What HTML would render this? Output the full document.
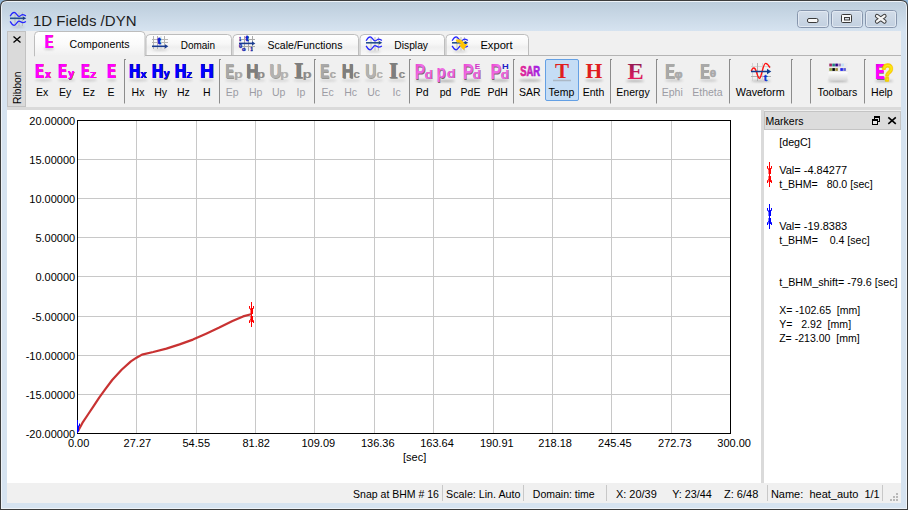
<!DOCTYPE html><html><head><meta charset="utf-8"><style>*{margin:0;padding:0}html,body{width:908px;height:510px;overflow:hidden;background:#8fb4d6}svg{display:block}</style></head><body>
<svg width="908" height="510" viewBox="0 0 908 510">
<defs>
<linearGradient id="gTitle" x1="0" y1="0" x2="0" y2="1"><stop offset="0" stop-color="#bccddc"/><stop offset="1" stop-color="#d6e3f0"/></linearGradient>
<linearGradient id="gTab" x1="0" y1="0" x2="0" y2="1"><stop offset="0" stop-color="#ffffff"/><stop offset="0.45" stop-color="#f7f7f7"/><stop offset="0.6" stop-color="#efefef"/><stop offset="1" stop-color="#fafafa"/></linearGradient>
<linearGradient id="gTabA" x1="0" y1="0" x2="0" y2="1"><stop offset="0" stop-color="#ffffff"/><stop offset="0.5" stop-color="#fbfbfb"/><stop offset="1" stop-color="#f0f0f0"/></linearGradient>
<linearGradient id="gBtn" x1="0" y1="0" x2="0" y2="1"><stop offset="0" stop-color="#d3dde9"/><stop offset="1" stop-color="#c2d0e0"/></linearGradient>
<linearGradient id="gSAR" x1="0" y1="0" x2="1" y2="0"><stop offset="0" stop-color="#e8208a"/><stop offset="1" stop-color="#9a20f0"/></linearGradient>
<linearGradient id="gEn" x1="0" y1="0" x2="0" y2="1"><stop offset="0" stop-color="#7a1a50"/><stop offset="1" stop-color="#ff1a60"/></linearGradient>
<linearGradient id="gTb" x1="0" y1="0" x2="0" y2="1"><stop offset="0" stop-color="#ffffff"/><stop offset="1" stop-color="#d8d8d8"/></linearGradient>
<linearGradient id="gPd" x1="0" y1="0" x2="1" y2="1"><stop offset="0" stop-color="#e830c8"/><stop offset="0.5" stop-color="#f070e8"/><stop offset="1" stop-color="#d040c8"/></linearGradient>
<linearGradient id="gE" x1="0" y1="0" x2="0.6" y2="1"><stop offset="0" stop-color="#b000b8"/><stop offset="0.35" stop-color="#ff00ff"/><stop offset="1" stop-color="#ff00ff"/></linearGradient>
<linearGradient id="gH" x1="0" y1="0" x2="0.6" y2="1"><stop offset="0" stop-color="#0000a0"/><stop offset="0.35" stop-color="#0000ff"/><stop offset="1" stop-color="#0000ff"/></linearGradient>
<filter id="blur1" x="-50%" y="-200%" width="200%" height="500%"><feGaussianBlur stdDeviation="1.1"/></filter>
</defs>
<path d="M0 7 Q0 0 7 0 H901 Q908 0 908 7 V510 H0 Z" fill="#3c3c3c"/>
<path d="M1 7 Q1 1 7 1 H901 Q907 1 907 7 V509 H1 Z" fill="#eef3f8"/>
<path d="M2 7 Q2 2 7 2 H901 Q906 2 906 7 V508 H2 Z" fill="#d6e3f0"/>
<path d="M2 7 Q2 2 7 2 H901 Q906 2 906 7 V31 H2 Z" fill="url(#gTitle)"/>
<rect x="7" y="31" width="894" height="472" fill="#f0f0f0" rx="0" />
<text x="33" y="26" font-family="'Liberation Sans', sans-serif" font-size="15.4" font-weight="normal" fill="#1e1e1e" text-anchor="start" textLength="103.5" lengthAdjust="spacingAndGlyphs"  xml:space="preserve">1D Fields /DYN</text>
<rect x="797.5" y="10.5" width="31" height="17" fill="url(#gBtn)" stroke="#8796ad" rx="3" />
<rect x="798.5" y="11.5" width="29" height="15" fill="none" stroke="#e2e9f2" rx="2" />
<rect x="831.5" y="10.5" width="31" height="17" fill="url(#gBtn)" stroke="#8796ad" rx="3" />
<rect x="832.5" y="11.5" width="29" height="15" fill="none" stroke="#e2e9f2" rx="2" />
<rect x="865.5" y="10.5" width="31" height="17" fill="url(#gBtn)" stroke="#8796ad" rx="3" />
<rect x="866.5" y="11.5" width="29" height="15" fill="none" stroke="#e2e9f2" rx="2" />
<rect x="807.5" y="18.5" width="10.5" height="4" fill="#f8f8f8" stroke="#3a3a3a" rx="1.5" />
<rect x="841.5" y="14.5" width="10" height="8" fill="#f8f8f8" stroke="#3a3a3a" rx="1" />
<rect x="844.5" y="17.5" width="5" height="2.5" fill="#d8dce4" stroke="#3a3a3a" rx="0" />
<path d="M877 16 L884.5 21.5 M884.5 16 L877 21.5" stroke="#3a3a3a" stroke-width="4.2" stroke-linecap="round"/>
<path d="M877 16 L884.5 21.5 M884.5 16 L877 21.5" stroke="#f4f4f4" stroke-width="2.2" stroke-linecap="round"/>
<path d="M146.0 55.5 V38.5 Q146.0 34.5 150.0 34.5 H227.5 Q231.5 34.5 231.5 38.5 V55.5" fill="url(#gTab)" stroke="#bdbdbd"/>
<path d="M233.0 55.5 V38.5 Q233.0 34.5 237.0 34.5 H354.5 Q358.5 34.5 358.5 38.5 V55.5" fill="url(#gTab)" stroke="#bdbdbd"/>
<path d="M360.0 55.5 V38.5 Q360.0 34.5 364.0 34.5 H440.5 Q444.5 34.5 444.5 38.5 V55.5" fill="url(#gTab)" stroke="#bdbdbd"/>
<path d="M446.0 55.5 V38.5 Q446.0 34.5 450.0 34.5 H524.5 Q528.5 34.5 528.5 38.5 V55.5" fill="url(#gTab)" stroke="#bdbdbd"/>
<path d="M145 55.5 H901" stroke="#b4b4b4"/>
<path d="M34.5 56 V35.5 Q34.5 31.5 38.5 31.5 H141 Q145 31.5 145 35.5 V56 Z" fill="url(#gTabA)" stroke="#bdbdbd"/>
<rect x="35" y="55" width="109.5" height="2" fill="#f0f0f0" rx="0" />
<rect x="7.5" y="31.5" width="18" height="75" fill="#dadada" stroke="#c2c2c2" rx="0" />
<path d="M13.5 36.5 L20.5 42.5 M20.5 36.5 L13.5 42.5" stroke="#000" stroke-width="1.3"/>
<text transform="translate(21,104) rotate(-90)" font-family="'Liberation Sans', sans-serif" font-size="11" fill="#000" textLength="32.5" lengthAdjust="spacingAndGlyphs">Ribbon</text>
<text x="69.5" y="48" font-family="'Liberation Sans', sans-serif" font-size="11" font-weight="normal" fill="#000" text-anchor="start" textLength="60" lengthAdjust="spacingAndGlyphs"  xml:space="preserve">Components</text>
<text x="180.7" y="49" font-family="'Liberation Sans', sans-serif" font-size="11" font-weight="normal" fill="#000" text-anchor="start" textLength="34.4" lengthAdjust="spacingAndGlyphs"  xml:space="preserve">Domain</text>
<text x="267.6" y="49" font-family="'Liberation Sans', sans-serif" font-size="11" font-weight="normal" fill="#000" text-anchor="start" textLength="74.8" lengthAdjust="spacingAndGlyphs"  xml:space="preserve">Scale/Functions</text>
<text x="394.3" y="49" font-family="'Liberation Sans', sans-serif" font-size="11" font-weight="normal" fill="#000" text-anchor="start" textLength="33.7" lengthAdjust="spacingAndGlyphs"  xml:space="preserve">Display</text>
<text x="480.4" y="49" font-family="'Liberation Sans', sans-serif" font-size="11" font-weight="normal" fill="#000" text-anchor="start" textLength="32.3" lengthAdjust="spacingAndGlyphs"  xml:space="preserve">Export</text>
<g transform="translate(10,12)" fill="none">
<path d="M5 0.5 V14 M9 0.5 V14 M12.4 0.5 V14" stroke="#b4b4ac" stroke-width="0.8"/>
<path d="M0.1 4.2 C1.5 1.5 3 0.3 4.2 0.3 C6 0.3 7.3 4.4 8.9 4.4 C10.5 4.4 11.3 2.5 12.6 2.5 C14 2.5 15 3.5 15.9 4" stroke="#2424ff" stroke-width="1.25"/>
<path d="M0.1 9.4 C1.5 12 3 13.3 4.2 13.3 C6 13.3 7.3 9.2 8.9 9.2 C10.5 9.2 11.3 10.5 12.6 10.5 C14 10.5 15 10 15.9 9.4" stroke="#2424ff" stroke-width="1.25"/>
<path d="M0 6.3 H14" stroke="#24508c" stroke-width="1.6"/>
<path d="M13 4.5 L16.3 6.3 L13 8.1 Z" fill="#1a3c8a"/>
</g>
<ellipse cx="18.00" cy="27" rx="7.00" ry="0.8" fill="#707070" opacity="0.35" filter="url(#blur1)"/>
<g transform="translate(366,36.5)" fill="none">
<path d="M5 0.5 V14 M9 0.5 V14 M12.4 0.5 V14" stroke="#b4b4ac" stroke-width="0.8"/>
<path d="M0.1 4.2 C1.5 1.5 3 0.3 4.2 0.3 C6 0.3 7.3 4.4 8.9 4.4 C10.5 4.4 11.3 2.5 12.6 2.5 C14 2.5 15 3.5 15.9 4" stroke="#2424ff" stroke-width="1.25"/>
<path d="M0.1 9.4 C1.5 12 3 13.3 4.2 13.3 C6 13.3 7.3 9.2 8.9 9.2 C10.5 9.2 11.3 10.5 12.6 10.5 C14 10.5 15 10 15.9 9.4" stroke="#2424ff" stroke-width="1.25"/>
<path d="M0 6.3 H14" stroke="#24508c" stroke-width="1.6"/>
<path d="M13 4.5 L16.3 6.3 L13 8.1 Z" fill="#1a3c8a"/>
</g>
<ellipse cx="374.00" cy="51.5" rx="7.00" ry="0.8" fill="#707070" opacity="0.35" filter="url(#blur1)"/>
<g transform="translate(452,36.5)" fill="none">
<path d="M5 0.5 V14 M9 0.5 V14 M12.4 0.5 V14" stroke="#b4b4ac" stroke-width="0.8"/>
<path d="M0.1 4.2 C1.5 1.5 3 0.3 4.2 0.3 C6 0.3 7.3 4.4 8.9 4.4 C10.5 4.4 11.3 2.5 12.6 2.5 C14 2.5 15 3.5 15.9 4" stroke="#2424ff" stroke-width="1.25"/>
<path d="M0.1 9.4 C1.5 12 3 13.3 4.2 13.3 C6 13.3 7.3 9.2 8.9 9.2 C10.5 9.2 11.3 10.5 12.6 10.5 C14 10.5 15 10 15.9 9.4" stroke="#2424ff" stroke-width="1.25"/>
<path d="M0 6.3 H14" stroke="#24508c" stroke-width="1.6"/>
<path d="M13 4.5 L16.3 6.3 L13 8.1 Z" fill="#1a3c8a"/>
</g>
<ellipse cx="460.00" cy="51.5" rx="7.00" ry="0.8" fill="#707070" opacity="0.35" filter="url(#blur1)"/>
<path d="M456.5 41.5 C459 40 462 41 463 45" stroke="#ffc400" stroke-width="3.2" fill="none"/>
<path d="M458.5 44.5 L467.5 44 L463.5 50 Z" fill="#ffc400"/>
<ellipse cx="49.00" cy="48.8" rx="5.00" ry="0.9" fill="#707070" opacity="0.45" filter="url(#blur1)"/>
<text transform="matrix(0.11964 0 0 0.17536 45.312 48.450)" font-family="'Liberation Sans'" font-weight="bold" font-size="100" fill="#5a5a50" opacity="0.55" stroke="#5a5a50" stroke-width="0.1" vector-effect="non-scaling-stroke" stroke-linejoin="round">E</text>
<text transform="matrix(0.11964 0 0 0.17536 45.612 48.450)" font-family="'Liberation Sans'" font-weight="bold" font-size="100" fill="#5a5a50" opacity="0.55" stroke="#5a5a50" stroke-width="0.1" vector-effect="non-scaling-stroke" stroke-linejoin="round">E</text>
<text transform="matrix(0.11964 0 0 0.17536 45.913 48.450)" font-family="'Liberation Sans'" font-weight="bold" font-size="100" fill="#5a5a50" opacity="0.55" stroke="#5a5a50" stroke-width="0.1" vector-effect="non-scaling-stroke" stroke-linejoin="round">E</text>
<text transform="matrix(0.11964 0 0 0.17536 44.712 47.850)" font-family="'Liberation Sans'" font-weight="bold" font-size="100" fill="url(#gE)"  stroke="url(#gE)" stroke-width="0.1" vector-effect="non-scaling-stroke" stroke-linejoin="round">E</text>
<text transform="matrix(0.11964 0 0 0.17536 45.012 47.850)" font-family="'Liberation Sans'" font-weight="bold" font-size="100" fill="url(#gE)"  stroke="url(#gE)" stroke-width="0.1" vector-effect="non-scaling-stroke" stroke-linejoin="round">E</text>
<text transform="matrix(0.11964 0 0 0.17536 45.312 47.850)" font-family="'Liberation Sans'" font-weight="bold" font-size="100" fill="url(#gE)"  stroke="url(#gE)" stroke-width="0.1" vector-effect="non-scaling-stroke" stroke-linejoin="round">E</text>
<path d="M153.5 36 V49 M157.5 36 V49 M164.5 36 V49 M152 39.5 H168 M152 42.5 H168" stroke="#b4b4b4" stroke-width="1"/>
<path d="M161 36 V49" stroke="#d8d8d8" stroke-width="1"/>
<text transform="matrix(0.08387 0 0 0.08485 157.666 44.165)" font-family="'Liberation Sans'" font-weight="bold" font-size="100" fill="#0a28d0"  stroke="#0a28d0" stroke-width="1.1" vector-effect="non-scaling-stroke" stroke-linejoin="round">t</text>
<path d="M152 46.3 H166" stroke="#1a3c90" stroke-width="1.6"/><path d="M165 44.2 L168.3 46.3 L165 48.4 Z" fill="#1a3c90"/>
<ellipse cx="160.00" cy="50" rx="8.00" ry="0.8" fill="#707070" opacity="0.35" filter="url(#blur1)"/>
<path d="M244.5 36 V51 M248.5 36 V51 M252.5 36 V51 M239 39.5 H255 M239 46.5 H255" stroke="#a8a8a8" stroke-width="1"/>
<text transform="matrix(0.03085 0 0 0.04565 239.290 40.625)" font-family="'Liberation Sans'" font-weight="bold" font-size="100" fill="#1a28b0"  stroke="#1a28b0" stroke-width="0.35" vector-effect="non-scaling-stroke" stroke-linejoin="round">1</text>
<text transform="matrix(0.07419 0 0 0.06818 245.826 41.232)" font-family="'Liberation Sans'" font-weight="bold" font-size="100" fill="#0a28d0"  stroke="#0a28d0" stroke-width="1.0" vector-effect="non-scaling-stroke" stroke-linejoin="round">t</text>
<path d="M239 43.4 H253" stroke="#1a3c90" stroke-width="1.6"/><path d="M252 41.3 L255.3 43.4 L252 45.5 Z" fill="#1a3c90"/>
<text transform="matrix(0.05521 0 0 0.04437 238.954 48.281)" font-family="'Liberation Sans'" font-weight="bold" font-size="100" fill="#1a28b0"  stroke="#1a28b0" stroke-width="0.35" vector-effect="non-scaling-stroke" stroke-linejoin="round">0</text>
<text transform="matrix(0.06562 0 0 0.04155 241.913 51.183)" font-family="'Liberation Sans'" font-weight="bold" font-size="100" fill="#1a28b0"  stroke="#1a28b0" stroke-width="0.35" vector-effect="non-scaling-stroke" stroke-linejoin="round">0</text>
<text transform="matrix(0.03511 0 0 0.04420 250.464 51.225)" font-family="'Liberation Sans'" font-weight="bold" font-size="100" fill="#1a28b0"  stroke="#1a28b0" stroke-width="0.35" vector-effect="non-scaling-stroke" stroke-linejoin="round">1</text>
<rect x="7" y="107" width="894" height="3" fill="#dadada" rx="0" />
<path d="M124.5 59 V103.5" stroke="#8c8c8c" stroke-width="1"/>
<path d="M124.5 59.5 H126" stroke="#8c8c8c" stroke-width="1"/>
<path d="M219.5 59 V103.5" stroke="#8c8c8c" stroke-width="1"/>
<path d="M219.5 59.5 H221" stroke="#8c8c8c" stroke-width="1"/>
<path d="M314.5 59 V103.5" stroke="#8c8c8c" stroke-width="1"/>
<path d="M314.5 59.5 H316" stroke="#8c8c8c" stroke-width="1"/>
<path d="M409.5 59 V103.5" stroke="#8c8c8c" stroke-width="1"/>
<path d="M409.5 59.5 H411" stroke="#8c8c8c" stroke-width="1"/>
<path d="M513.5 59 V103.5" stroke="#8c8c8c" stroke-width="1"/>
<path d="M513.5 59.5 H515" stroke="#8c8c8c" stroke-width="1"/>
<path d="M610.5 59 V103.5" stroke="#8c8c8c" stroke-width="1"/>
<path d="M610.5 59.5 H612" stroke="#8c8c8c" stroke-width="1"/>
<path d="M656.5 59 V103.5" stroke="#8c8c8c" stroke-width="1"/>
<path d="M656.5 59.5 H658" stroke="#8c8c8c" stroke-width="1"/>
<path d="M729.5 59 V103.5" stroke="#8c8c8c" stroke-width="1"/>
<path d="M729.5 59.5 H731" stroke="#8c8c8c" stroke-width="1"/>
<path d="M791.5 59 V103.5" stroke="#8c8c8c" stroke-width="1"/>
<path d="M791.5 59.5 H793" stroke="#8c8c8c" stroke-width="1"/>
<path d="M810.5 59 V103.5" stroke="#8c8c8c" stroke-width="1"/>
<path d="M810.5 59.5 H812" stroke="#8c8c8c" stroke-width="1"/>
<path d="M864.5 59 V103.5" stroke="#8c8c8c" stroke-width="1"/>
<path d="M864.5 59.5 H866" stroke="#8c8c8c" stroke-width="1"/>
<rect x="545.5" y="59.5" width="33" height="41" fill="#c5ddf5" stroke="#64a0e4" rx="1.5" />
<text x="36.07" y="96" font-family="'Liberation Sans', sans-serif" font-size="11" font-weight="normal" fill="#000" text-anchor="start" textLength="12.26" lengthAdjust="spacingAndGlyphs"  xml:space="preserve">Ex</text>
<text x="58.97" y="96" font-family="'Liberation Sans', sans-serif" font-size="11" font-weight="normal" fill="#000" text-anchor="start" textLength="12.26" lengthAdjust="spacingAndGlyphs"  xml:space="preserve">Ey</text>
<text x="82.87" y="96" font-family="'Liberation Sans', sans-serif" font-size="11" font-weight="normal" fill="#000" text-anchor="start" textLength="12.26" lengthAdjust="spacingAndGlyphs"  xml:space="preserve">Ez</text>
<text x="107.5" y="96" font-family="'Liberation Sans', sans-serif" font-size="11" font-weight="normal" fill="#000" text-anchor="start" textLength="7.01" lengthAdjust="spacingAndGlyphs"  xml:space="preserve">E</text>
<text x="131.58" y="96" font-family="'Liberation Sans', sans-serif" font-size="11" font-weight="normal" fill="#000" text-anchor="start" textLength="12.84" lengthAdjust="spacingAndGlyphs"  xml:space="preserve">Hx</text>
<text x="154.18" y="96" font-family="'Liberation Sans', sans-serif" font-size="11" font-weight="normal" fill="#000" text-anchor="start" textLength="12.84" lengthAdjust="spacingAndGlyphs"  xml:space="preserve">Hy</text>
<text x="176.88" y="96" font-family="'Liberation Sans', sans-serif" font-size="11" font-weight="normal" fill="#000" text-anchor="start" textLength="12.84" lengthAdjust="spacingAndGlyphs"  xml:space="preserve">Hz</text>
<text x="202.91" y="96" font-family="'Liberation Sans', sans-serif" font-size="11" font-weight="normal" fill="#000" text-anchor="start" textLength="7.59" lengthAdjust="spacingAndGlyphs"  xml:space="preserve">H</text>
<text x="225.77" y="96" font-family="'Liberation Sans', sans-serif" font-size="11" font-weight="normal" fill="#9c9ca4" text-anchor="start" textLength="12.85" lengthAdjust="spacingAndGlyphs"  xml:space="preserve">Ep</text>
<text x="248.88" y="96" font-family="'Liberation Sans', sans-serif" font-size="11" font-weight="normal" fill="#9c9ca4" text-anchor="start" textLength="13.43" lengthAdjust="spacingAndGlyphs"  xml:space="preserve">Hp</text>
<text x="271.89" y="96" font-family="'Liberation Sans', sans-serif" font-size="11" font-weight="normal" fill="#9c9ca4" text-anchor="start" textLength="13.43" lengthAdjust="spacingAndGlyphs"  xml:space="preserve">Up</text>
<text x="296.62" y="96" font-family="'Liberation Sans', sans-serif" font-size="11" font-weight="normal" fill="#9c9ca4" text-anchor="start" textLength="8.76" lengthAdjust="spacingAndGlyphs"  xml:space="preserve">Ip</text>
<text x="321.47" y="96" font-family="'Liberation Sans', sans-serif" font-size="11" font-weight="normal" fill="#9c9ca4" text-anchor="start" textLength="12.26" lengthAdjust="spacingAndGlyphs"  xml:space="preserve">Ec</text>
<text x="344.18" y="96" font-family="'Liberation Sans', sans-serif" font-size="11" font-weight="normal" fill="#9c9ca4" text-anchor="start" textLength="12.84" lengthAdjust="spacingAndGlyphs"  xml:space="preserve">Hc</text>
<text x="367.18" y="96" font-family="'Liberation Sans', sans-serif" font-size="11" font-weight="normal" fill="#9c9ca4" text-anchor="start" textLength="12.84" lengthAdjust="spacingAndGlyphs"  xml:space="preserve">Uc</text>
<text x="392.62" y="96" font-family="'Liberation Sans', sans-serif" font-size="11" font-weight="normal" fill="#9c9ca4" text-anchor="start" textLength="8.17" lengthAdjust="spacingAndGlyphs"  xml:space="preserve">Ic</text>
<text x="415.77" y="96" font-family="'Liberation Sans', sans-serif" font-size="11" font-weight="normal" fill="#000" text-anchor="start" textLength="12.85" lengthAdjust="spacingAndGlyphs"  xml:space="preserve">Pd</text>
<text x="439.75" y="96" font-family="'Liberation Sans', sans-serif" font-size="11" font-weight="normal" fill="#000" text-anchor="start" textLength="11.69" lengthAdjust="spacingAndGlyphs"  xml:space="preserve">pd</text>
<text x="460.57" y="96" font-family="'Liberation Sans', sans-serif" font-size="11" font-weight="normal" fill="#000" text-anchor="start" textLength="19.86" lengthAdjust="spacingAndGlyphs"  xml:space="preserve">PdE</text>
<text x="487.48" y="96" font-family="'Liberation Sans', sans-serif" font-size="11" font-weight="normal" fill="#000" text-anchor="start" textLength="20.44" lengthAdjust="spacingAndGlyphs"  xml:space="preserve">PdH</text>
<text x="519.0" y="96" font-family="'Liberation Sans', sans-serif" font-size="11" font-weight="normal" fill="#000" text-anchor="start" textLength="21.6" lengthAdjust="spacingAndGlyphs"  xml:space="preserve">SAR</text>
<text x="548.55" y="96" font-family="'Liberation Sans', sans-serif" font-size="11" font-weight="normal" fill="#000" text-anchor="start" textLength="25.69" lengthAdjust="spacingAndGlyphs"  xml:space="preserve">Temp</text>
<text x="582.7" y="96" font-family="'Liberation Sans', sans-serif" font-size="11" font-weight="normal" fill="#000" text-anchor="start" textLength="21.61" lengthAdjust="spacingAndGlyphs"  xml:space="preserve">Enth</text>
<text x="616.36" y="96" font-family="'Liberation Sans', sans-serif" font-size="11" font-weight="normal" fill="#000" text-anchor="start" textLength="33.29" lengthAdjust="spacingAndGlyphs"  xml:space="preserve">Energy</text>
<text x="661.78" y="96" font-family="'Liberation Sans', sans-serif" font-size="11" font-weight="normal" fill="#9c9ca4" text-anchor="start" textLength="21.03" lengthAdjust="spacingAndGlyphs"  xml:space="preserve">Ephi</text>
<text x="692.22" y="96" font-family="'Liberation Sans', sans-serif" font-size="11" font-weight="normal" fill="#9c9ca4" text-anchor="start" textLength="30.37" lengthAdjust="spacingAndGlyphs"  xml:space="preserve">Etheta</text>
<text x="735.85" y="96" font-family="'Liberation Sans', sans-serif" font-size="11" font-weight="normal" fill="#000" text-anchor="start" textLength="48.9" lengthAdjust="spacingAndGlyphs"  xml:space="preserve">Waveform</text>
<text x="817.44" y="96" font-family="'Liberation Sans', sans-serif" font-size="11" font-weight="normal" fill="#000" text-anchor="start" textLength="39.71" lengthAdjust="spacingAndGlyphs"  xml:space="preserve">Toolbars</text>
<text x="871.1" y="96" font-family="'Liberation Sans', sans-serif" font-size="11" font-weight="normal" fill="#000" text-anchor="start" textLength="21.61" lengthAdjust="spacingAndGlyphs"  xml:space="preserve">Help</text>
<ellipse cx="43.30" cy="80.3" rx="8.50" ry="1.1" fill="#707070" opacity="0.3" filter="url(#blur1)"/>
<text transform="matrix(0.12143 0 0 0.20290 35.650 78.200)" font-family="'Liberation Sans'" font-weight="bold" font-size="100" fill="#5a5a50" opacity="0.55" stroke="#5a5a50" stroke-width="0.2" vector-effect="non-scaling-stroke" stroke-linejoin="round">E</text>
<text transform="matrix(0.12143 0 0 0.20290 35.950 78.200)" font-family="'Liberation Sans'" font-weight="bold" font-size="100" fill="#5a5a50" opacity="0.55" stroke="#5a5a50" stroke-width="0.2" vector-effect="non-scaling-stroke" stroke-linejoin="round">E</text>
<text transform="matrix(0.12143 0 0 0.20290 36.250 78.200)" font-family="'Liberation Sans'" font-weight="bold" font-size="100" fill="#5a5a50" opacity="0.55" stroke="#5a5a50" stroke-width="0.2" vector-effect="non-scaling-stroke" stroke-linejoin="round">E</text>
<text transform="matrix(0.12143 0 0 0.20290 35.050 77.600)" font-family="'Liberation Sans'" font-weight="bold" font-size="100" fill="url(#gE)"  stroke="url(#gE)" stroke-width="0.2" vector-effect="non-scaling-stroke" stroke-linejoin="round">E</text>
<text transform="matrix(0.12143 0 0 0.20290 35.350 77.600)" font-family="'Liberation Sans'" font-weight="bold" font-size="100" fill="url(#gE)"  stroke="url(#gE)" stroke-width="0.2" vector-effect="non-scaling-stroke" stroke-linejoin="round">E</text>
<text transform="matrix(0.12143 0 0 0.20290 35.650 77.600)" font-family="'Liberation Sans'" font-weight="bold" font-size="100" fill="url(#gE)"  stroke="url(#gE)" stroke-width="0.2" vector-effect="non-scaling-stroke" stroke-linejoin="round">E</text>
<text transform="matrix(0.10370 0 0 0.11132 45.396 78.200)" font-family="'Liberation Sans'" font-weight="bold" font-size="100" fill="#5a5a50" opacity="0.55">x</text>
<text transform="matrix(0.10370 0 0 0.11132 45.546 78.200)" font-family="'Liberation Sans'" font-weight="bold" font-size="100" fill="#5a5a50" opacity="0.55">x</text>
<text transform="matrix(0.10370 0 0 0.11132 45.696 78.200)" font-family="'Liberation Sans'" font-weight="bold" font-size="100" fill="#5a5a50" opacity="0.55">x</text>
<text transform="matrix(0.10370 0 0 0.11132 44.796 77.600)" font-family="'Liberation Sans'" font-weight="bold" font-size="100" fill="url(#gE)" >x</text>
<text transform="matrix(0.10370 0 0 0.11132 44.946 77.600)" font-family="'Liberation Sans'" font-weight="bold" font-size="100" fill="url(#gE)" >x</text>
<text transform="matrix(0.10370 0 0 0.11132 45.096 77.600)" font-family="'Liberation Sans'" font-weight="bold" font-size="100" fill="url(#gE)" >x</text>
<ellipse cx="66.45" cy="80.3" rx="8.65" ry="1.1" fill="#707070" opacity="0.3" filter="url(#blur1)"/>
<text transform="matrix(0.12143 0 0 0.20290 58.650 78.200)" font-family="'Liberation Sans'" font-weight="bold" font-size="100" fill="#5a5a50" opacity="0.55" stroke="#5a5a50" stroke-width="0.2" vector-effect="non-scaling-stroke" stroke-linejoin="round">E</text>
<text transform="matrix(0.12143 0 0 0.20290 58.950 78.200)" font-family="'Liberation Sans'" font-weight="bold" font-size="100" fill="#5a5a50" opacity="0.55" stroke="#5a5a50" stroke-width="0.2" vector-effect="non-scaling-stroke" stroke-linejoin="round">E</text>
<text transform="matrix(0.12143 0 0 0.20290 59.250 78.200)" font-family="'Liberation Sans'" font-weight="bold" font-size="100" fill="#5a5a50" opacity="0.55" stroke="#5a5a50" stroke-width="0.2" vector-effect="non-scaling-stroke" stroke-linejoin="round">E</text>
<text transform="matrix(0.12143 0 0 0.20290 58.050 77.600)" font-family="'Liberation Sans'" font-weight="bold" font-size="100" fill="url(#gE)"  stroke="url(#gE)" stroke-width="0.2" vector-effect="non-scaling-stroke" stroke-linejoin="round">E</text>
<text transform="matrix(0.12143 0 0 0.20290 58.350 77.600)" font-family="'Liberation Sans'" font-weight="bold" font-size="100" fill="url(#gE)"  stroke="url(#gE)" stroke-width="0.2" vector-effect="non-scaling-stroke" stroke-linejoin="round">E</text>
<text transform="matrix(0.12143 0 0 0.20290 58.650 77.600)" font-family="'Liberation Sans'" font-weight="bold" font-size="100" fill="url(#gE)"  stroke="url(#gE)" stroke-width="0.2" vector-effect="non-scaling-stroke" stroke-linejoin="round">E</text>
<text transform="matrix(0.10741 0 0 0.10676 68.493 77.958)" font-family="'Liberation Sans'" font-weight="bold" font-size="100" fill="#5a5a50" opacity="0.55">y</text>
<text transform="matrix(0.10741 0 0 0.10676 68.643 77.958)" font-family="'Liberation Sans'" font-weight="bold" font-size="100" fill="#5a5a50" opacity="0.55">y</text>
<text transform="matrix(0.10741 0 0 0.10676 68.793 77.958)" font-family="'Liberation Sans'" font-weight="bold" font-size="100" fill="#5a5a50" opacity="0.55">y</text>
<text transform="matrix(0.10741 0 0 0.10676 67.893 77.358)" font-family="'Liberation Sans'" font-weight="bold" font-size="100" fill="url(#gE)" >y</text>
<text transform="matrix(0.10741 0 0 0.10676 68.043 77.358)" font-family="'Liberation Sans'" font-weight="bold" font-size="100" fill="url(#gE)" >y</text>
<text transform="matrix(0.10741 0 0 0.10676 68.193 77.358)" font-family="'Liberation Sans'" font-weight="bold" font-size="100" fill="url(#gE)" >y</text>
<ellipse cx="88.75" cy="80.3" rx="8.05" ry="1.1" fill="#707070" opacity="0.3" filter="url(#blur1)"/>
<text transform="matrix(0.11786 0 0 0.20290 81.575 78.200)" font-family="'Liberation Sans'" font-weight="bold" font-size="100" fill="#5a5a50" opacity="0.55" stroke="#5a5a50" stroke-width="0.2" vector-effect="non-scaling-stroke" stroke-linejoin="round">E</text>
<text transform="matrix(0.11786 0 0 0.20290 81.875 78.200)" font-family="'Liberation Sans'" font-weight="bold" font-size="100" fill="#5a5a50" opacity="0.55" stroke="#5a5a50" stroke-width="0.2" vector-effect="non-scaling-stroke" stroke-linejoin="round">E</text>
<text transform="matrix(0.11786 0 0 0.20290 82.175 78.200)" font-family="'Liberation Sans'" font-weight="bold" font-size="100" fill="#5a5a50" opacity="0.55" stroke="#5a5a50" stroke-width="0.2" vector-effect="non-scaling-stroke" stroke-linejoin="round">E</text>
<text transform="matrix(0.11786 0 0 0.20290 80.975 77.600)" font-family="'Liberation Sans'" font-weight="bold" font-size="100" fill="url(#gE)"  stroke="url(#gE)" stroke-width="0.2" vector-effect="non-scaling-stroke" stroke-linejoin="round">E</text>
<text transform="matrix(0.11786 0 0 0.20290 81.275 77.600)" font-family="'Liberation Sans'" font-weight="bold" font-size="100" fill="url(#gE)"  stroke="url(#gE)" stroke-width="0.2" vector-effect="non-scaling-stroke" stroke-linejoin="round">E</text>
<text transform="matrix(0.11786 0 0 0.20290 81.575 77.600)" font-family="'Liberation Sans'" font-weight="bold" font-size="100" fill="url(#gE)"  stroke="url(#gE)" stroke-width="0.2" vector-effect="non-scaling-stroke" stroke-linejoin="round">E</text>
<text transform="matrix(0.12381 0 0 0.11132 90.405 78.200)" font-family="'Liberation Sans'" font-weight="bold" font-size="100" fill="#5a5a50" opacity="0.55">z</text>
<text transform="matrix(0.12381 0 0 0.11132 90.555 78.200)" font-family="'Liberation Sans'" font-weight="bold" font-size="100" fill="#5a5a50" opacity="0.55">z</text>
<text transform="matrix(0.12381 0 0 0.11132 90.705 78.200)" font-family="'Liberation Sans'" font-weight="bold" font-size="100" fill="#5a5a50" opacity="0.55">z</text>
<text transform="matrix(0.12381 0 0 0.11132 89.805 77.600)" font-family="'Liberation Sans'" font-weight="bold" font-size="100" fill="url(#gE)" >z</text>
<text transform="matrix(0.12381 0 0 0.11132 89.955 77.600)" font-family="'Liberation Sans'" font-weight="bold" font-size="100" fill="url(#gE)" >z</text>
<text transform="matrix(0.12381 0 0 0.11132 90.105 77.600)" font-family="'Liberation Sans'" font-weight="bold" font-size="100" fill="url(#gE)" >z</text>
<ellipse cx="111.65" cy="80.3" rx="4.85" ry="1.1" fill="#707070" opacity="0.3" filter="url(#blur1)"/>
<text transform="matrix(0.12321 0 0 0.20290 107.637 78.200)" font-family="'Liberation Sans'" font-weight="bold" font-size="100" fill="#5a5a50" opacity="0.55" stroke="#5a5a50" stroke-width="0.2" vector-effect="non-scaling-stroke" stroke-linejoin="round">E</text>
<text transform="matrix(0.12321 0 0 0.20290 107.937 78.200)" font-family="'Liberation Sans'" font-weight="bold" font-size="100" fill="#5a5a50" opacity="0.55" stroke="#5a5a50" stroke-width="0.2" vector-effect="non-scaling-stroke" stroke-linejoin="round">E</text>
<text transform="matrix(0.12321 0 0 0.20290 108.237 78.200)" font-family="'Liberation Sans'" font-weight="bold" font-size="100" fill="#5a5a50" opacity="0.55" stroke="#5a5a50" stroke-width="0.2" vector-effect="non-scaling-stroke" stroke-linejoin="round">E</text>
<text transform="matrix(0.12321 0 0 0.20290 107.037 77.600)" font-family="'Liberation Sans'" font-weight="bold" font-size="100" fill="url(#gE)"  stroke="url(#gE)" stroke-width="0.2" vector-effect="non-scaling-stroke" stroke-linejoin="round">E</text>
<text transform="matrix(0.12321 0 0 0.20290 107.337 77.600)" font-family="'Liberation Sans'" font-weight="bold" font-size="100" fill="url(#gE)"  stroke="url(#gE)" stroke-width="0.2" vector-effect="non-scaling-stroke" stroke-linejoin="round">E</text>
<text transform="matrix(0.12321 0 0 0.20290 107.637 77.600)" font-family="'Liberation Sans'" font-weight="bold" font-size="100" fill="url(#gE)"  stroke="url(#gE)" stroke-width="0.2" vector-effect="non-scaling-stroke" stroke-linejoin="round">E</text>
<ellipse cx="138.20" cy="80.3" rx="9.40" ry="1.1" fill="#707070" opacity="0.3" filter="url(#blur1)"/>
<text transform="matrix(0.15000 0 0 0.20290 129.450 78.200)" font-family="'Liberation Sans'" font-weight="bold" font-size="100" fill="#5a5a50" opacity="0.55" stroke="#5a5a50" stroke-width="0.2" vector-effect="non-scaling-stroke" stroke-linejoin="round">H</text>
<text transform="matrix(0.15000 0 0 0.20290 129.800 78.200)" font-family="'Liberation Sans'" font-weight="bold" font-size="100" fill="#5a5a50" opacity="0.55" stroke="#5a5a50" stroke-width="0.2" vector-effect="non-scaling-stroke" stroke-linejoin="round">H</text>
<text transform="matrix(0.15000 0 0 0.20290 130.150 78.200)" font-family="'Liberation Sans'" font-weight="bold" font-size="100" fill="#5a5a50" opacity="0.55" stroke="#5a5a50" stroke-width="0.2" vector-effect="non-scaling-stroke" stroke-linejoin="round">H</text>
<text transform="matrix(0.15000 0 0 0.20290 128.850 77.600)" font-family="'Liberation Sans'" font-weight="bold" font-size="100" fill="url(#gH)"  stroke="url(#gH)" stroke-width="0.2" vector-effect="non-scaling-stroke" stroke-linejoin="round">H</text>
<text transform="matrix(0.15000 0 0 0.20290 129.200 77.600)" font-family="'Liberation Sans'" font-weight="bold" font-size="100" fill="url(#gH)"  stroke="url(#gH)" stroke-width="0.2" vector-effect="non-scaling-stroke" stroke-linejoin="round">H</text>
<text transform="matrix(0.15000 0 0 0.20290 129.550 77.600)" font-family="'Liberation Sans'" font-weight="bold" font-size="100" fill="url(#gH)"  stroke="url(#gH)" stroke-width="0.2" vector-effect="non-scaling-stroke" stroke-linejoin="round">H</text>
<text transform="matrix(0.10926 0 0 0.11132 140.891 78.200)" font-family="'Liberation Sans'" font-weight="bold" font-size="100" fill="#5a5a50" opacity="0.55">x</text>
<text transform="matrix(0.10926 0 0 0.11132 141.041 78.200)" font-family="'Liberation Sans'" font-weight="bold" font-size="100" fill="#5a5a50" opacity="0.55">x</text>
<text transform="matrix(0.10926 0 0 0.11132 141.191 78.200)" font-family="'Liberation Sans'" font-weight="bold" font-size="100" fill="#5a5a50" opacity="0.55">x</text>
<text transform="matrix(0.10926 0 0 0.11132 140.291 77.600)" font-family="'Liberation Sans'" font-weight="bold" font-size="100" fill="url(#gH)" >x</text>
<text transform="matrix(0.10926 0 0 0.11132 140.441 77.600)" font-family="'Liberation Sans'" font-weight="bold" font-size="100" fill="url(#gH)" >x</text>
<text transform="matrix(0.10926 0 0 0.11132 140.591 77.600)" font-family="'Liberation Sans'" font-weight="bold" font-size="100" fill="url(#gH)" >x</text>
<ellipse cx="161.10" cy="80.3" rx="9.50" ry="1.1" fill="#707070" opacity="0.3" filter="url(#blur1)"/>
<text transform="matrix(0.15517 0 0 0.20290 152.214 78.200)" font-family="'Liberation Sans'" font-weight="bold" font-size="100" fill="#5a5a50" opacity="0.55" stroke="#5a5a50" stroke-width="0.2" vector-effect="non-scaling-stroke" stroke-linejoin="round">H</text>
<text transform="matrix(0.15517 0 0 0.20290 152.564 78.200)" font-family="'Liberation Sans'" font-weight="bold" font-size="100" fill="#5a5a50" opacity="0.55" stroke="#5a5a50" stroke-width="0.2" vector-effect="non-scaling-stroke" stroke-linejoin="round">H</text>
<text transform="matrix(0.15517 0 0 0.20290 152.914 78.200)" font-family="'Liberation Sans'" font-weight="bold" font-size="100" fill="#5a5a50" opacity="0.55" stroke="#5a5a50" stroke-width="0.2" vector-effect="non-scaling-stroke" stroke-linejoin="round">H</text>
<text transform="matrix(0.15517 0 0 0.20290 151.614 77.600)" font-family="'Liberation Sans'" font-weight="bold" font-size="100" fill="url(#gH)"  stroke="url(#gH)" stroke-width="0.2" vector-effect="non-scaling-stroke" stroke-linejoin="round">H</text>
<text transform="matrix(0.15517 0 0 0.20290 151.964 77.600)" font-family="'Liberation Sans'" font-weight="bold" font-size="100" fill="url(#gH)"  stroke="url(#gH)" stroke-width="0.2" vector-effect="non-scaling-stroke" stroke-linejoin="round">H</text>
<text transform="matrix(0.15517 0 0 0.20290 152.314 77.600)" font-family="'Liberation Sans'" font-weight="bold" font-size="100" fill="url(#gH)"  stroke="url(#gH)" stroke-width="0.2" vector-effect="non-scaling-stroke" stroke-linejoin="round">H</text>
<text transform="matrix(0.10741 0 0 0.10676 163.993 77.958)" font-family="'Liberation Sans'" font-weight="bold" font-size="100" fill="#5a5a50" opacity="0.55">y</text>
<text transform="matrix(0.10741 0 0 0.10676 164.143 77.958)" font-family="'Liberation Sans'" font-weight="bold" font-size="100" fill="#5a5a50" opacity="0.55">y</text>
<text transform="matrix(0.10741 0 0 0.10676 164.293 77.958)" font-family="'Liberation Sans'" font-weight="bold" font-size="100" fill="#5a5a50" opacity="0.55">y</text>
<text transform="matrix(0.10741 0 0 0.10676 163.393 77.358)" font-family="'Liberation Sans'" font-weight="bold" font-size="100" fill="url(#gH)" >y</text>
<text transform="matrix(0.10741 0 0 0.10676 163.543 77.358)" font-family="'Liberation Sans'" font-weight="bold" font-size="100" fill="url(#gH)" >y</text>
<text transform="matrix(0.10741 0 0 0.10676 163.693 77.358)" font-family="'Liberation Sans'" font-weight="bold" font-size="100" fill="url(#gH)" >y</text>
<ellipse cx="183.60" cy="80.3" rx="9.10" ry="1.1" fill="#707070" opacity="0.3" filter="url(#blur1)"/>
<text transform="matrix(0.15690 0 0 0.20290 175.102 78.200)" font-family="'Liberation Sans'" font-weight="bold" font-size="100" fill="#5a5a50" opacity="0.55" stroke="#5a5a50" stroke-width="0.2" vector-effect="non-scaling-stroke" stroke-linejoin="round">H</text>
<text transform="matrix(0.15690 0 0 0.20290 175.452 78.200)" font-family="'Liberation Sans'" font-weight="bold" font-size="100" fill="#5a5a50" opacity="0.55" stroke="#5a5a50" stroke-width="0.2" vector-effect="non-scaling-stroke" stroke-linejoin="round">H</text>
<text transform="matrix(0.15690 0 0 0.20290 175.802 78.200)" font-family="'Liberation Sans'" font-weight="bold" font-size="100" fill="#5a5a50" opacity="0.55" stroke="#5a5a50" stroke-width="0.2" vector-effect="non-scaling-stroke" stroke-linejoin="round">H</text>
<text transform="matrix(0.15690 0 0 0.20290 174.502 77.600)" font-family="'Liberation Sans'" font-weight="bold" font-size="100" fill="url(#gH)"  stroke="url(#gH)" stroke-width="0.2" vector-effect="non-scaling-stroke" stroke-linejoin="round">H</text>
<text transform="matrix(0.15690 0 0 0.20290 174.852 77.600)" font-family="'Liberation Sans'" font-weight="bold" font-size="100" fill="url(#gH)"  stroke="url(#gH)" stroke-width="0.2" vector-effect="non-scaling-stroke" stroke-linejoin="round">H</text>
<text transform="matrix(0.15690 0 0 0.20290 175.202 77.600)" font-family="'Liberation Sans'" font-weight="bold" font-size="100" fill="url(#gH)"  stroke="url(#gH)" stroke-width="0.2" vector-effect="non-scaling-stroke" stroke-linejoin="round">H</text>
<text transform="matrix(0.11667 0 0 0.11132 186.633 78.200)" font-family="'Liberation Sans'" font-weight="bold" font-size="100" fill="#5a5a50" opacity="0.55">z</text>
<text transform="matrix(0.11667 0 0 0.11132 186.783 78.200)" font-family="'Liberation Sans'" font-weight="bold" font-size="100" fill="#5a5a50" opacity="0.55">z</text>
<text transform="matrix(0.11667 0 0 0.11132 186.933 78.200)" font-family="'Liberation Sans'" font-weight="bold" font-size="100" fill="#5a5a50" opacity="0.55">z</text>
<text transform="matrix(0.11667 0 0 0.11132 186.033 77.600)" font-family="'Liberation Sans'" font-weight="bold" font-size="100" fill="url(#gH)" >z</text>
<text transform="matrix(0.11667 0 0 0.11132 186.183 77.600)" font-family="'Liberation Sans'" font-weight="bold" font-size="100" fill="url(#gH)" >z</text>
<text transform="matrix(0.11667 0 0 0.11132 186.333 77.600)" font-family="'Liberation Sans'" font-weight="bold" font-size="100" fill="url(#gH)" >z</text>
<ellipse cx="206.90" cy="80.3" rx="6.90" ry="1.1" fill="#707070" opacity="0.3" filter="url(#blur1)"/>
<text transform="matrix(0.18793 0 0 0.20290 200.384 78.200)" font-family="'Liberation Sans'" font-weight="bold" font-size="100" fill="#5a5a50" opacity="0.55" stroke="#5a5a50" stroke-width="0.2" vector-effect="non-scaling-stroke" stroke-linejoin="round">H</text>
<text transform="matrix(0.18793 0 0 0.20290 200.734 78.200)" font-family="'Liberation Sans'" font-weight="bold" font-size="100" fill="#5a5a50" opacity="0.55" stroke="#5a5a50" stroke-width="0.2" vector-effect="non-scaling-stroke" stroke-linejoin="round">H</text>
<text transform="matrix(0.18793 0 0 0.20290 201.084 78.200)" font-family="'Liberation Sans'" font-weight="bold" font-size="100" fill="#5a5a50" opacity="0.55" stroke="#5a5a50" stroke-width="0.2" vector-effect="non-scaling-stroke" stroke-linejoin="round">H</text>
<text transform="matrix(0.18793 0 0 0.20290 199.784 77.600)" font-family="'Liberation Sans'" font-weight="bold" font-size="100" fill="url(#gH)"  stroke="url(#gH)" stroke-width="0.2" vector-effect="non-scaling-stroke" stroke-linejoin="round">H</text>
<text transform="matrix(0.18793 0 0 0.20290 200.134 77.600)" font-family="'Liberation Sans'" font-weight="bold" font-size="100" fill="url(#gH)"  stroke="url(#gH)" stroke-width="0.2" vector-effect="non-scaling-stroke" stroke-linejoin="round">H</text>
<text transform="matrix(0.18793 0 0 0.20290 200.484 77.600)" font-family="'Liberation Sans'" font-weight="bold" font-size="100" fill="url(#gH)"  stroke="url(#gH)" stroke-width="0.2" vector-effect="non-scaling-stroke" stroke-linejoin="round">H</text>
<ellipse cx="234.05" cy="80.5" rx="8.95" ry="1.1" fill="#707070" opacity="0.25" filter="url(#blur1)"/>
<text transform="matrix(0.12679 0 0 0.20870 225.812 78.800)" font-family="'Liberation Sans'" font-weight="bold" font-size="100" fill="#5a5a50" opacity="0.25">E</text>
<text transform="matrix(0.12679 0 0 0.20870 226.113 78.800)" font-family="'Liberation Sans'" font-weight="bold" font-size="100" fill="#5a5a50" opacity="0.25">E</text>
<text transform="matrix(0.12679 0 0 0.20870 226.412 78.800)" font-family="'Liberation Sans'" font-weight="bold" font-size="100" fill="#5a5a50" opacity="0.25">E</text>
<text transform="matrix(0.12679 0 0 0.20870 225.212 78.200)" font-family="'Liberation Sans'" font-weight="bold" font-size="100" fill="#a8a8a8" >E</text>
<text transform="matrix(0.12679 0 0 0.20870 225.512 78.200)" font-family="'Liberation Sans'" font-weight="bold" font-size="100" fill="#a8a8a8" >E</text>
<text transform="matrix(0.12679 0 0 0.20870 225.812 78.200)" font-family="'Liberation Sans'" font-weight="bold" font-size="100" fill="#a8a8a8" >E</text>
<text transform="matrix(0.14200 0 0 0.11333 234.506 78.120)" font-family="'Liberation Sans'" font-weight="bold" font-size="100" fill="#5a5a50" opacity="0.25">p</text>
<text transform="matrix(0.14200 0 0 0.11333 233.906 77.520)" font-family="'Liberation Sans'" font-weight="bold" font-size="100" fill="#a8a8a8" >p</text>
<ellipse cx="255.75" cy="80.5" rx="9.65" ry="1.1" fill="#707070" opacity="0.25" filter="url(#blur1)"/>
<text transform="matrix(0.16897 0 0 0.20870 246.517 78.800)" font-family="'Liberation Sans'" font-weight="bold" font-size="100" fill="#5a5a50" opacity="0.25">H</text>
<text transform="matrix(0.16897 0 0 0.20870 246.817 78.800)" font-family="'Liberation Sans'" font-weight="bold" font-size="100" fill="#5a5a50" opacity="0.25">H</text>
<text transform="matrix(0.16897 0 0 0.20870 247.117 78.800)" font-family="'Liberation Sans'" font-weight="bold" font-size="100" fill="#5a5a50" opacity="0.25">H</text>
<text transform="matrix(0.16897 0 0 0.20870 245.917 78.200)" font-family="'Liberation Sans'" font-weight="bold" font-size="100" fill="#7e7e7e" >H</text>
<text transform="matrix(0.16897 0 0 0.20870 246.217 78.200)" font-family="'Liberation Sans'" font-weight="bold" font-size="100" fill="#7e7e7e" >H</text>
<text transform="matrix(0.16897 0 0 0.20870 246.517 78.200)" font-family="'Liberation Sans'" font-weight="bold" font-size="100" fill="#7e7e7e" >H</text>
<text transform="matrix(0.12800 0 0 0.11333 257.704 78.120)" font-family="'Liberation Sans'" font-weight="bold" font-size="100" fill="#5a5a50" opacity="0.25">p</text>
<text transform="matrix(0.12800 0 0 0.11333 257.104 77.520)" font-family="'Liberation Sans'" font-weight="bold" font-size="100" fill="#8a8a8a" >p</text>
<ellipse cx="279.10" cy="80.5" rx="9.90" ry="1.1" fill="#707070" opacity="0.25" filter="url(#blur1)"/>
<text transform="matrix(0.16167 0 0 0.20571 269.830 78.594)" font-family="'Liberation Sans'" font-weight="bold" font-size="100" fill="#5a5a50" opacity="0.25">U</text>
<text transform="matrix(0.16167 0 0 0.20571 270.130 78.594)" font-family="'Liberation Sans'" font-weight="bold" font-size="100" fill="#5a5a50" opacity="0.25">U</text>
<text transform="matrix(0.16167 0 0 0.20571 270.430 78.594)" font-family="'Liberation Sans'" font-weight="bold" font-size="100" fill="#5a5a50" opacity="0.25">U</text>
<text transform="matrix(0.16167 0 0 0.20571 269.230 77.994)" font-family="'Liberation Sans'" font-weight="bold" font-size="100" fill="#b2b2b2" >U</text>
<text transform="matrix(0.16167 0 0 0.20571 269.530 77.994)" font-family="'Liberation Sans'" font-weight="bold" font-size="100" fill="#b2b2b2" >U</text>
<text transform="matrix(0.16167 0 0 0.20571 269.830 77.994)" font-family="'Liberation Sans'" font-weight="bold" font-size="100" fill="#b2b2b2" >U</text>
<text transform="matrix(0.14000 0 0 0.11333 280.620 78.120)" font-family="'Liberation Sans'" font-weight="bold" font-size="100" fill="#5a5a50" opacity="0.25">p</text>
<text transform="matrix(0.14000 0 0 0.11333 280.020 77.520)" font-family="'Liberation Sans'" font-weight="bold" font-size="100" fill="#b2b2b2" >p</text>
<ellipse cx="302.70" cy="80.5" rx="9.30" ry="1.1" fill="#707070" opacity="0.25" filter="url(#blur1)"/>
<text transform="matrix(0.24242 0 0 0.22154 294.273 78.800)" font-family="'Liberation Serif'" font-weight="bold" font-size="100" fill="#5a5a50" opacity="0.25">I</text>
<text transform="matrix(0.24242 0 0 0.22154 294.573 78.800)" font-family="'Liberation Serif'" font-weight="bold" font-size="100" fill="#5a5a50" opacity="0.25">I</text>
<text transform="matrix(0.24242 0 0 0.22154 294.873 78.800)" font-family="'Liberation Serif'" font-weight="bold" font-size="100" fill="#5a5a50" opacity="0.25">I</text>
<text transform="matrix(0.24242 0 0 0.22154 293.673 78.200)" font-family="'Liberation Serif'" font-weight="bold" font-size="100" fill="#7e7e7e" >I</text>
<text transform="matrix(0.24242 0 0 0.22154 293.973 78.200)" font-family="'Liberation Serif'" font-weight="bold" font-size="100" fill="#7e7e7e" >I</text>
<text transform="matrix(0.24242 0 0 0.22154 294.273 78.200)" font-family="'Liberation Serif'" font-weight="bold" font-size="100" fill="#7e7e7e" >I</text>
<text transform="matrix(0.15000 0 0 0.11333 303.050 78.120)" font-family="'Liberation Sans'" font-weight="bold" font-size="100" fill="#5a5a50" opacity="0.25">p</text>
<text transform="matrix(0.15000 0 0 0.11333 302.450 77.520)" font-family="'Liberation Sans'" font-weight="bold" font-size="100" fill="#8a8a8a" >p</text>
<ellipse cx="328.25" cy="80.5" rx="8.35" ry="1.1" fill="#707070" opacity="0.25" filter="url(#blur1)"/>
<text transform="matrix(0.13393 0 0 0.20870 320.562 78.800)" font-family="'Liberation Sans'" font-weight="bold" font-size="100" fill="#5a5a50" opacity="0.25">E</text>
<text transform="matrix(0.13393 0 0 0.20870 320.863 78.800)" font-family="'Liberation Sans'" font-weight="bold" font-size="100" fill="#5a5a50" opacity="0.25">E</text>
<text transform="matrix(0.13393 0 0 0.20870 321.163 78.800)" font-family="'Liberation Sans'" font-weight="bold" font-size="100" fill="#5a5a50" opacity="0.25">E</text>
<text transform="matrix(0.13393 0 0 0.20870 319.962 78.200)" font-family="'Liberation Sans'" font-weight="bold" font-size="100" fill="#a8a8a8" >E</text>
<text transform="matrix(0.13393 0 0 0.20870 320.262 78.200)" font-family="'Liberation Sans'" font-weight="bold" font-size="100" fill="#a8a8a8" >E</text>
<text transform="matrix(0.13393 0 0 0.20870 320.562 78.200)" font-family="'Liberation Sans'" font-weight="bold" font-size="100" fill="#a8a8a8" >E</text>
<text transform="matrix(0.11429 0 0 0.11636 330.143 78.284)" font-family="'Liberation Sans'" font-weight="bold" font-size="100" fill="#5a5a50" opacity="0.25">c</text>
<text transform="matrix(0.11429 0 0 0.11636 329.543 77.684)" font-family="'Liberation Sans'" font-weight="bold" font-size="100" fill="#a8a8a8" >c</text>
<ellipse cx="351.05" cy="80.5" rx="9.35" ry="1.1" fill="#707070" opacity="0.25" filter="url(#blur1)"/>
<text transform="matrix(0.16034 0 0 0.20870 342.178 78.800)" font-family="'Liberation Sans'" font-weight="bold" font-size="100" fill="#5a5a50" opacity="0.25">H</text>
<text transform="matrix(0.16034 0 0 0.20870 342.478 78.800)" font-family="'Liberation Sans'" font-weight="bold" font-size="100" fill="#5a5a50" opacity="0.25">H</text>
<text transform="matrix(0.16034 0 0 0.20870 342.778 78.800)" font-family="'Liberation Sans'" font-weight="bold" font-size="100" fill="#5a5a50" opacity="0.25">H</text>
<text transform="matrix(0.16034 0 0 0.20870 341.578 78.200)" font-family="'Liberation Sans'" font-weight="bold" font-size="100" fill="#7e7e7e" >H</text>
<text transform="matrix(0.16034 0 0 0.20870 341.878 78.200)" font-family="'Liberation Sans'" font-weight="bold" font-size="100" fill="#7e7e7e" >H</text>
<text transform="matrix(0.16034 0 0 0.20870 342.178 78.200)" font-family="'Liberation Sans'" font-weight="bold" font-size="100" fill="#7e7e7e" >H</text>
<text transform="matrix(0.11837 0 0 0.11636 353.727 78.284)" font-family="'Liberation Sans'" font-weight="bold" font-size="100" fill="#5a5a50" opacity="0.25">c</text>
<text transform="matrix(0.11837 0 0 0.11636 353.127 77.684)" font-family="'Liberation Sans'" font-weight="bold" font-size="100" fill="#8a8a8a" >c</text>
<ellipse cx="374.10" cy="80.5" rx="9.30" ry="1.1" fill="#707070" opacity="0.25" filter="url(#blur1)"/>
<text transform="matrix(0.15333 0 0 0.20571 365.480 78.594)" font-family="'Liberation Sans'" font-weight="bold" font-size="100" fill="#5a5a50" opacity="0.25">U</text>
<text transform="matrix(0.15333 0 0 0.20571 365.780 78.594)" font-family="'Liberation Sans'" font-weight="bold" font-size="100" fill="#5a5a50" opacity="0.25">U</text>
<text transform="matrix(0.15333 0 0 0.20571 366.080 78.594)" font-family="'Liberation Sans'" font-weight="bold" font-size="100" fill="#5a5a50" opacity="0.25">U</text>
<text transform="matrix(0.15333 0 0 0.20571 364.880 77.994)" font-family="'Liberation Sans'" font-weight="bold" font-size="100" fill="#b2b2b2" >U</text>
<text transform="matrix(0.15333 0 0 0.20571 365.180 77.994)" font-family="'Liberation Sans'" font-weight="bold" font-size="100" fill="#b2b2b2" >U</text>
<text transform="matrix(0.15333 0 0 0.20571 365.480 77.994)" font-family="'Liberation Sans'" font-weight="bold" font-size="100" fill="#b2b2b2" >U</text>
<text transform="matrix(0.11633 0 0 0.11636 376.835 78.284)" font-family="'Liberation Sans'" font-weight="bold" font-size="100" fill="#5a5a50" opacity="0.25">c</text>
<text transform="matrix(0.11633 0 0 0.11636 376.235 77.684)" font-family="'Liberation Sans'" font-weight="bold" font-size="100" fill="#b2b2b2" >c</text>
<ellipse cx="397.10" cy="80.5" rx="8.70" ry="1.1" fill="#707070" opacity="0.25" filter="url(#blur1)"/>
<text transform="matrix(0.23030 0 0 0.22154 389.309 78.800)" font-family="'Liberation Serif'" font-weight="bold" font-size="100" fill="#5a5a50" opacity="0.25">I</text>
<text transform="matrix(0.23030 0 0 0.22154 389.609 78.800)" font-family="'Liberation Serif'" font-weight="bold" font-size="100" fill="#5a5a50" opacity="0.25">I</text>
<text transform="matrix(0.23030 0 0 0.22154 389.909 78.800)" font-family="'Liberation Serif'" font-weight="bold" font-size="100" fill="#5a5a50" opacity="0.25">I</text>
<text transform="matrix(0.23030 0 0 0.22154 388.709 78.200)" font-family="'Liberation Serif'" font-weight="bold" font-size="100" fill="#7e7e7e" >I</text>
<text transform="matrix(0.23030 0 0 0.22154 389.009 78.200)" font-family="'Liberation Serif'" font-weight="bold" font-size="100" fill="#7e7e7e" >I</text>
<text transform="matrix(0.23030 0 0 0.22154 389.309 78.200)" font-family="'Liberation Serif'" font-weight="bold" font-size="100" fill="#7e7e7e" >I</text>
<text transform="matrix(0.11837 0 0 0.11636 399.127 78.284)" font-family="'Liberation Sans'" font-weight="bold" font-size="100" fill="#5a5a50" opacity="0.25">c</text>
<text transform="matrix(0.11837 0 0 0.11636 398.527 77.684)" font-family="'Liberation Sans'" font-weight="bold" font-size="100" fill="#8a8a8a" >c</text>
<ellipse cx="424.00" cy="80.5" rx="9.00" ry="1.1" fill="#707070" opacity="0.55" filter="url(#blur1)"/>
<text transform="matrix(0.16071 0 0 0.22609 415.175 79.600)" font-family="'Liberation Sans'" font-weight="bold" font-size="100" fill="#7a6070" >P</text>
<text transform="matrix(0.15714 0 0 0.22754 414.700 79.200)" font-family="'Liberation Sans'" font-weight="bold" font-size="100" fill="url(#gPd)" >P</text>
<text transform="matrix(0.13600 0 0 0.12466 424.956 79.175)" font-family="'Liberation Sans'" font-weight="bold" font-size="100" fill="#7a6070" >d</text>
<text transform="matrix(0.13400 0 0 0.12466 424.564 78.775)" font-family="'Liberation Sans'" font-weight="bold" font-size="100" fill="url(#gPd)" >d</text>
<ellipse cx="446.00" cy="81" rx="9.00" ry="1.1" fill="#707070" opacity="0.55" filter="url(#blur1)"/>
<text transform="matrix(0.15400 0 0 0.18400 436.922 78.536)" font-family="'Liberation Sans'" font-weight="bold" font-size="100" fill="#7a6070" >p</text>
<text transform="matrix(0.15400 0 0 0.18400 436.422 78.136)" font-family="'Liberation Sans'" font-weight="bold" font-size="100" fill="url(#gPd)" >p</text>
<text transform="matrix(0.14400 0 0 0.13151 447.324 78.068)" font-family="'Liberation Sans'" font-weight="bold" font-size="100" fill="#7a6070" >d</text>
<text transform="matrix(0.14400 0 0 0.13151 446.824 77.668)" font-family="'Liberation Sans'" font-weight="bold" font-size="100" fill="url(#gPd)" >d</text>
<ellipse cx="472.00" cy="80.5" rx="9.00" ry="1.1" fill="#707070" opacity="0.55" filter="url(#blur1)"/>
<text transform="matrix(0.16071 0 0 0.22609 463.175 79.600)" font-family="'Liberation Sans'" font-weight="bold" font-size="100" fill="#7a6070" >P</text>
<text transform="matrix(0.16250 0 0 0.22754 462.663 79.200)" font-family="'Liberation Sans'" font-weight="bold" font-size="100" fill="url(#gPd)" >P</text>
<text transform="matrix(0.13800 0 0 0.12466 473.048 79.175)" font-family="'Liberation Sans'" font-weight="bold" font-size="100" fill="#7a6070" >d</text>
<text transform="matrix(0.13800 0 0 0.12466 472.548 78.775)" font-family="'Liberation Sans'" font-weight="bold" font-size="100" fill="url(#gPd)" >d</text>
<text transform="matrix(0.08214 0 0 0.07971 474.725 69.000)" font-family="'Liberation Sans'" font-weight="bold" font-size="100" fill="#d030c8" >E</text>
<ellipse cx="500.00" cy="80.5" rx="9.00" ry="1.1" fill="#707070" opacity="0.55" filter="url(#blur1)"/>
<text transform="matrix(0.16071 0 0 0.22609 491.075 79.600)" font-family="'Liberation Sans'" font-weight="bold" font-size="100" fill="#7a6070" >P</text>
<text transform="matrix(0.16250 0 0 0.22754 490.562 79.200)" font-family="'Liberation Sans'" font-weight="bold" font-size="100" fill="url(#gPd)" >P</text>
<text transform="matrix(0.14000 0 0 0.12466 500.940 79.175)" font-family="'Liberation Sans'" font-weight="bold" font-size="100" fill="#7a6070" >d</text>
<text transform="matrix(0.14000 0 0 0.12466 500.440 78.775)" font-family="'Liberation Sans'" font-weight="bold" font-size="100" fill="url(#gPd)" >d</text>
<text transform="matrix(0.09310 0 0 0.07971 501.948 69.000)" font-family="'Liberation Sans'" font-weight="bold" font-size="100" fill="#2020c8" >H</text>
<ellipse cx="530.00" cy="80.5" rx="11.00" ry="1.1" fill="#707070" opacity="0.55" filter="url(#blur1)"/>
<text transform="matrix(0.09417 0 0 0.14507 520.217 76.155)" font-family="'Liberation Sans'" font-weight="bold" font-size="100" fill="url(#gSAR)"  stroke="url(#gSAR)" stroke-width="0.6" vector-effect="non-scaling-stroke" stroke-linejoin="round">SAR</text>
<path d="M553 80.5 H571" stroke="#9aa0a8" stroke-width="1.6" opacity="0.6"/>
<text transform="matrix(0.21111 0 0 0.21077 554.878 77.800)" font-family="'Liberation Serif'" font-weight="bold" font-size="100" fill="#e01e1e" >T</text>
<ellipse cx="594.00" cy="80.5" rx="9.00" ry="1.1" fill="#707070" opacity="0.45" filter="url(#blur1)"/>
<text transform="matrix(0.21622 0 0 0.21077 585.568 77.800)" font-family="'Liberation Serif'" font-weight="bold" font-size="100" fill="#e01e1e" >H</text>
<ellipse cx="635.00" cy="81" rx="9.00" ry="1.1" fill="#707070" opacity="0.5" filter="url(#blur1)"/>
<text transform="matrix(0.24333 0 0 0.23692 627.413 79.300)" font-family="'Liberation Serif'" font-weight="bold" font-size="100" fill="url(#gEn)" >E</text>
<ellipse cx="674.00" cy="80.5" rx="9.00" ry="1.1" fill="#707070" opacity="0.35" filter="url(#blur1)"/>
<text transform="matrix(0.13750 0 0 0.21159 665.638 79.200)" font-family="'Liberation Sans'" font-weight="bold" font-size="100" fill="#5a5a50" opacity="0.25">E</text>
<text transform="matrix(0.13750 0 0 0.21159 665.938 79.200)" font-family="'Liberation Sans'" font-weight="bold" font-size="100" fill="#5a5a50" opacity="0.25">E</text>
<text transform="matrix(0.13750 0 0 0.21159 666.238 79.200)" font-family="'Liberation Sans'" font-weight="bold" font-size="100" fill="#5a5a50" opacity="0.25">E</text>
<text transform="matrix(0.13750 0 0 0.21159 665.038 78.600)" font-family="'Liberation Sans'" font-weight="bold" font-size="100" fill="#a8a8a8" >E</text>
<text transform="matrix(0.13750 0 0 0.21159 665.337 78.600)" font-family="'Liberation Sans'" font-weight="bold" font-size="100" fill="#a8a8a8" >E</text>
<text transform="matrix(0.13750 0 0 0.21159 665.638 78.600)" font-family="'Liberation Sans'" font-weight="bold" font-size="100" fill="#a8a8a8" >E</text>
<text transform="matrix(0.11094 0 0 0.11200 674.506 77.898)" font-family="'Liberation Sans'" font-weight="bold" font-size="100" fill="#a8a8a8"  stroke="#a8a8a8" stroke-width="0.7" vector-effect="non-scaling-stroke" stroke-linejoin="round">φ</text>
<ellipse cx="708.50" cy="80.5" rx="8.50" ry="1.1" fill="#707070" opacity="0.35" filter="url(#blur1)"/>
<text transform="matrix(0.13571 0 0 0.21159 700.650 79.200)" font-family="'Liberation Sans'" font-weight="bold" font-size="100" fill="#5a5a50" opacity="0.25">E</text>
<text transform="matrix(0.13571 0 0 0.21159 700.950 79.200)" font-family="'Liberation Sans'" font-weight="bold" font-size="100" fill="#5a5a50" opacity="0.25">E</text>
<text transform="matrix(0.13571 0 0 0.21159 701.250 79.200)" font-family="'Liberation Sans'" font-weight="bold" font-size="100" fill="#5a5a50" opacity="0.25">E</text>
<text transform="matrix(0.13571 0 0 0.21159 700.050 78.600)" font-family="'Liberation Sans'" font-weight="bold" font-size="100" fill="#a8a8a8" >E</text>
<text transform="matrix(0.13571 0 0 0.21159 700.350 78.600)" font-family="'Liberation Sans'" font-weight="bold" font-size="100" fill="#a8a8a8" >E</text>
<text transform="matrix(0.13571 0 0 0.21159 700.650 78.600)" font-family="'Liberation Sans'" font-weight="bold" font-size="100" fill="#a8a8a8" >E</text>
<text transform="matrix(0.11739 0 0 0.09452 709.780 77.155)" font-family="'Liberation Sans'" font-weight="bold" font-size="100" fill="#a8a8a8"  stroke="#a8a8a8" stroke-width="0.7" vector-effect="non-scaling-stroke" stroke-linejoin="round">θ</text>
<ellipse cx="761.00" cy="81" rx="10.00" ry="0.9" fill="#707070" opacity="0.45" filter="url(#blur1)"/>
<g>
<path d="M752.5 63 V81 M762.5 63 V81 M751 66.5 H771" stroke="#d4d4d4" stroke-width="1"/>
<path d="M757.5 63 V81 M751 76.5 H771" stroke="#b0b0b0" stroke-width="1"/>
<path d="M751.2 71.2 C752.5 67.5 754 67.3 755.2 69 C756.8 71.5 757.8 78.5 759.5 78.3 C761.5 78.2 763 63.3 765.5 63.4 C767.2 63.5 768.8 65.5 769.9 67.6" stroke="#ff1010" stroke-width="1.4" fill="none"/>
<path d="M751 71.5 H768" stroke="#103c90" stroke-width="1.5"/>
<path d="M767 68.8 L771.3 71.5 L767 74.2 Z" fill="#103c90"/>
</g>
<text transform="matrix(0.10323 0 0 0.09848 763.697 80.802)" font-family="'Liberation Sans'" font-weight="bold" font-size="100" fill="#0a30d0"  stroke="#0a30d0" stroke-width="0.4" vector-effect="non-scaling-stroke" stroke-linejoin="round">t</text>
<ellipse cx="838.00" cy="81" rx="10.00" ry="1.0" fill="#707070" opacity="0.55" filter="url(#blur1)"/>
<g>
<rect x="828.5" y="63" width="19" height="9" fill="#ececec"/>
<rect x="828.5" y="72" width="19" height="8.5" fill="url(#gTb)"/>
<rect x="829.3" y="63.6" width="2.6" height="2.8" fill="#a02060"/><rect x="832.3" y="63.6" width="2.6" height="2.8" fill="#208080"/><rect x="835.3" y="63.6" width="2.6" height="2.8" fill="#300080"/><rect x="838.3" y="63.6" width="2.6" height="2.8" fill="#a080c0"/><rect x="841.3" y="63.6" width="2.6" height="2.8" fill="#c0e0f8"/>
<rect x="829.3" y="68.1" width="2.6" height="2.8" fill="#90a040"/><rect x="832.3" y="68.1" width="2.6" height="2.8" fill="#000000"/><rect x="835.3" y="68.1" width="2.6" height="2.8" fill="#a09040"/><rect x="840.3" y="68.1" width="2.6" height="2.8" fill="#2020f0"/><rect x="843.3" y="68.1" width="2.6" height="2.8" fill="#6060d0"/>
</g>
<ellipse cx="884.00" cy="81" rx="9.00" ry="1.1" fill="#707070" opacity="0.5" filter="url(#blur1)"/>
<text transform="matrix(0.12857 0 0 0.21884 875.900 79.700)" font-family="'Liberation Sans'" font-weight="bold" font-size="100" fill="#5a5a50" opacity="0.4" stroke="#5a5a50" stroke-width="0.2" vector-effect="non-scaling-stroke" stroke-linejoin="round">E</text>
<text transform="matrix(0.12857 0 0 0.21884 876.250 79.700)" font-family="'Liberation Sans'" font-weight="bold" font-size="100" fill="#5a5a50" opacity="0.4" stroke="#5a5a50" stroke-width="0.2" vector-effect="non-scaling-stroke" stroke-linejoin="round">E</text>
<text transform="matrix(0.12857 0 0 0.21884 876.600 79.700)" font-family="'Liberation Sans'" font-weight="bold" font-size="100" fill="#5a5a50" opacity="0.4" stroke="#5a5a50" stroke-width="0.2" vector-effect="non-scaling-stroke" stroke-linejoin="round">E</text>
<text transform="matrix(0.12857 0 0 0.21884 875.300 79.100)" font-family="'Liberation Sans'" font-weight="bold" font-size="100" fill="url(#gE)"  stroke="url(#gE)" stroke-width="0.2" vector-effect="non-scaling-stroke" stroke-linejoin="round">E</text>
<text transform="matrix(0.12857 0 0 0.21884 875.650 79.100)" font-family="'Liberation Sans'" font-weight="bold" font-size="100" fill="url(#gE)"  stroke="url(#gE)" stroke-width="0.2" vector-effect="non-scaling-stroke" stroke-linejoin="round">E</text>
<text transform="matrix(0.12857 0 0 0.21884 876.000 79.100)" font-family="'Liberation Sans'" font-weight="bold" font-size="100" fill="url(#gE)"  stroke="url(#gE)" stroke-width="0.2" vector-effect="non-scaling-stroke" stroke-linejoin="round">E</text>
<text transform="matrix(0.19800 0 0 0.23857 881.760 80.950)" font-family="'Liberation Sans'" font-weight="bold" font-size="100" fill="#ffe818"  stroke="#f4d000" stroke-width="1.3" vector-effect="non-scaling-stroke" stroke-linejoin="round">?</text>
<rect x="7" y="110" width="754" height="373" fill="#ffffff" rx="0" />
<path d="M136.5 120 V433 M196.5 120 V433 M255.5 120 V433 M314.5 120 V433 M374.5 120 V433 M433.5 120 V433 M493.5 120 V433 M552.5 120 V433 M611.5 120 V433 M671.5 120 V433 M77 159.5 H730 M77 198.5 H730 M77 237.5 H730 M77 276.5 H730 M77 316.5 H730 M77 355.5 H730 M77 394.5 H730" stroke="#c8c8c8" stroke-width="1"/>
<rect x="77.5" y="120.5" width="653" height="313" fill="none" stroke="#000" stroke-width="1"/>
<text x="75.2" y="125" font-family="'Liberation Sans', sans-serif" font-size="11" font-weight="normal" fill="#000" text-anchor="end"  xml:space="preserve">20.00000</text>
<text x="75.2" y="164" font-family="'Liberation Sans', sans-serif" font-size="11" font-weight="normal" fill="#000" text-anchor="end"  xml:space="preserve">15.00000</text>
<text x="75.2" y="203" font-family="'Liberation Sans', sans-serif" font-size="11" font-weight="normal" fill="#000" text-anchor="end"  xml:space="preserve">10.00000</text>
<text x="75.2" y="242" font-family="'Liberation Sans', sans-serif" font-size="11" font-weight="normal" fill="#000" text-anchor="end"  xml:space="preserve">5.00000</text>
<text x="75.2" y="281" font-family="'Liberation Sans', sans-serif" font-size="11" font-weight="normal" fill="#000" text-anchor="end"  xml:space="preserve">0.00000</text>
<text x="75.2" y="321" font-family="'Liberation Sans', sans-serif" font-size="11" font-weight="normal" fill="#000" text-anchor="end"  xml:space="preserve">-5.00000</text>
<text x="75.2" y="360" font-family="'Liberation Sans', sans-serif" font-size="11" font-weight="normal" fill="#000" text-anchor="end"  xml:space="preserve">-10.00000</text>
<text x="75.2" y="399" font-family="'Liberation Sans', sans-serif" font-size="11" font-weight="normal" fill="#000" text-anchor="end"  xml:space="preserve">-15.00000</text>
<text x="75.2" y="438" font-family="'Liberation Sans', sans-serif" font-size="11" font-weight="normal" fill="#000" text-anchor="end"  xml:space="preserve">-20.00000</text>
<text x="67.9" y="447" font-family="'Liberation Sans', sans-serif" font-size="11" font-weight="normal" fill="#000" text-anchor="start"  xml:space="preserve">0.00</text>
<text x="123.60000000000001" y="447" font-family="'Liberation Sans', sans-serif" font-size="11" font-weight="normal" fill="#000" text-anchor="start"  xml:space="preserve">27.27</text>
<text x="182.5" y="447" font-family="'Liberation Sans', sans-serif" font-size="11" font-weight="normal" fill="#000" text-anchor="start"  xml:space="preserve">54.55</text>
<text x="242.4" y="447" font-family="'Liberation Sans', sans-serif" font-size="11" font-weight="normal" fill="#000" text-anchor="start"  xml:space="preserve">81.82</text>
<text x="301.5" y="447" font-family="'Liberation Sans', sans-serif" font-size="11" font-weight="normal" fill="#000" text-anchor="start"  xml:space="preserve">109.09</text>
<text x="360.9" y="447" font-family="'Liberation Sans', sans-serif" font-size="11" font-weight="normal" fill="#000" text-anchor="start"  xml:space="preserve">136.36</text>
<text x="420.2" y="447" font-family="'Liberation Sans', sans-serif" font-size="11" font-weight="normal" fill="#000" text-anchor="start"  xml:space="preserve">163.64</text>
<text x="480.0" y="447" font-family="'Liberation Sans', sans-serif" font-size="11" font-weight="normal" fill="#000" text-anchor="start"  xml:space="preserve">190.91</text>
<text x="538.3" y="447" font-family="'Liberation Sans', sans-serif" font-size="11" font-weight="normal" fill="#000" text-anchor="start"  xml:space="preserve">218.18</text>
<text x="598.1" y="447" font-family="'Liberation Sans', sans-serif" font-size="11" font-weight="normal" fill="#000" text-anchor="start"  xml:space="preserve">245.45</text>
<text x="658.1" y="447" font-family="'Liberation Sans', sans-serif" font-size="11" font-weight="normal" fill="#000" text-anchor="start"  xml:space="preserve">272.73</text>
<text x="717.3" y="447" font-family="'Liberation Sans', sans-serif" font-size="11" font-weight="normal" fill="#000" text-anchor="start"  xml:space="preserve">300.00</text>
<text x="403" y="461" font-family="'Liberation Sans', sans-serif" font-size="11" font-weight="normal" fill="#000" text-anchor="start"  xml:space="preserve">[sec]</text>
<clipPath id="pc"><rect x="77" y="120" width="653" height="313"/></clipPath>
<path d="M77.8 431.6 L82.4 422.9 L88 414.5 L93.6 406.1 L99.2 397.7 L104.8 389.9 L112.2 380 L121.6 369.8 L130.9 361.4 L136.5 357.7 L142 354.6 L153.2 352.0 L166.4 348.6 L179.6 344.4 L192.9 339.6 L206.1 333.7 L219.3 327.6 L232.5 321.1 L243.1 316.4 L251 314.2" stroke="#c83232" stroke-width="2.2" fill="none" stroke-linejoin="round"/>
<g clip-path="url(#pc)">
<g fill="none" stroke="#0000ff" stroke-width="1" shape-rendering="crispEdges"><path d="M77.5 419.5 V444.5"/><path d="M75.5 423.5 V426.0 L77.5 427.5 M79.5 423.5 V426.0 L77.5 427.5" shape-rendering="auto"/><path d="M75.5 440.5 V438.0 L77.5 436.5 M79.5 440.5 V438.0 L77.5 436.5" shape-rendering="auto"/></g>
<rect x="76.5" y="425.5" width="2.5" height="6" fill="#0000ff"/>
<rect x="76.5" y="433.5" width="2.5" height="6" fill="#0000ff"/>
</g>
<g fill="none" stroke="#ff0000" stroke-width="1" shape-rendering="crispEdges"><path d="M251.5 302 V327"/><path d="M249.5 306 V308.5 L251.5 310 M253.5 306 V308.5 L251.5 310" shape-rendering="auto"/><path d="M249.5 323 V320.5 L251.5 319 M253.5 323 V320.5 L251.5 319" shape-rendering="auto"/></g>
<rect x="250.5" y="308" width="2.5" height="6" fill="#ff0000"/>
<rect x="250.5" y="316" width="2.5" height="6" fill="#ff0000"/>
<rect x="761" y="110" width="3" height="373" fill="#dadada" rx="0" />
<rect x="764" y="110" width="137" height="1" fill="#f0f0f0" rx="0" />
<rect x="764.5" y="111.5" width="136" height="18" fill="#dcdcdc" stroke="#c4c4c4" rx="0" />
<rect x="764" y="130" width="137" height="353" fill="#ffffff" rx="0" />
<text x="765.5" y="125" font-family="'Liberation Sans', sans-serif" font-size="11" font-weight="normal" fill="#000" text-anchor="start" textLength="37.94" lengthAdjust="spacingAndGlyphs"  xml:space="preserve">Markers</text>
<rect x="874.5" y="116.5" width="5" height="5" fill="none" stroke="#000"/><rect x="874" y="116" width="6" height="2" fill="#000"/>
<rect x="872.5" y="119.5" width="5" height="5" fill="#e8e8e8" stroke="#000"/><rect x="872" y="119" width="6" height="2" fill="#000"/>
<path d="M888.3 117.3 L895.8 123.8 M895.8 117.3 L888.3 123.8" stroke="#000" stroke-width="1.6"/>
<text x="779.2" y="146" font-family="'Liberation Sans', sans-serif" font-size="11" font-weight="normal" fill="#000" text-anchor="start" textLength="31.6" lengthAdjust="spacingAndGlyphs"  xml:space="preserve">[degC]</text>
<g fill="none" stroke="#ff0000" stroke-width="1" shape-rendering="crispEdges"><path d="M769.5 162 V187"/><path d="M767.5 166 V168.5 L769.5 170 M771.5 166 V168.5 L769.5 170" shape-rendering="auto"/><path d="M767.5 183 V180.5 L769.5 179 M771.5 183 V180.5 L769.5 179" shape-rendering="auto"/></g>
<rect x="768.5" y="168" width="2.5" height="6" fill="#ff0000"/>
<rect x="768.5" y="176" width="2.5" height="6" fill="#ff0000"/>
<text x="779.2" y="174" font-family="'Liberation Sans', sans-serif" font-size="11" font-weight="normal" fill="#000" text-anchor="start"  xml:space="preserve">Val= -4.84277</text>
<text x="779.2" y="188" font-family="'Liberation Sans', sans-serif" font-size="11" font-weight="normal" fill="#000" text-anchor="start" textLength="93.42" lengthAdjust="spacingAndGlyphs"  xml:space="preserve">t_BHM=   80.0 [sec]</text>
<g fill="none" stroke="#0000ff" stroke-width="1" shape-rendering="crispEdges"><path d="M769.5 204 V229"/><path d="M767.5 208 V210.5 L769.5 212 M771.5 208 V210.5 L769.5 212" shape-rendering="auto"/><path d="M767.5 225 V222.5 L769.5 221 M771.5 225 V222.5 L769.5 221" shape-rendering="auto"/></g>
<rect x="768.5" y="210" width="2.5" height="6" fill="#0000ff"/>
<rect x="768.5" y="218" width="2.5" height="6" fill="#0000ff"/>
<text x="779.2" y="230" font-family="'Liberation Sans', sans-serif" font-size="11" font-weight="normal" fill="#000" text-anchor="start"  xml:space="preserve">Val= -19.8383</text>
<text x="779.2" y="244" font-family="'Liberation Sans', sans-serif" font-size="11" font-weight="normal" fill="#000" text-anchor="start" textLength="90.56" lengthAdjust="spacingAndGlyphs"  xml:space="preserve">t_BHM=    0.4 [sec]</text>
<text x="779.2" y="286" font-family="'Liberation Sans', sans-serif" font-size="11" font-weight="normal" fill="#000" text-anchor="start" textLength="118.33" lengthAdjust="spacingAndGlyphs"  xml:space="preserve">t_BHM_shift= -79.6 [sec]</text>
<text x="779.2" y="314" font-family="'Liberation Sans', sans-serif" font-size="11" font-weight="normal" fill="#000" text-anchor="start" textLength="81.04" lengthAdjust="spacingAndGlyphs"  xml:space="preserve">X= -102.65  [mm]</text>
<text x="779.2" y="328" font-family="'Liberation Sans', sans-serif" font-size="11" font-weight="normal" fill="#000" text-anchor="start" textLength="71.89" lengthAdjust="spacingAndGlyphs"  xml:space="preserve">Y=   2.92  [mm]</text>
<text x="779.2" y="342" font-family="'Liberation Sans', sans-serif" font-size="11" font-weight="normal" fill="#000" text-anchor="start" textLength="80.44" lengthAdjust="spacingAndGlyphs"  xml:space="preserve">Z= -213.00  [mm]</text>
<text x="353.1" y="498" font-family="'Liberation Sans', sans-serif" font-size="11" font-weight="normal" fill="#000" text-anchor="start" textLength="85.84" lengthAdjust="spacingAndGlyphs"  xml:space="preserve">Snap at BHM # 16</text>
<text x="446.1" y="498" font-family="'Liberation Sans', sans-serif" font-size="11" font-weight="normal" fill="#000" text-anchor="start" textLength="74.32" lengthAdjust="spacingAndGlyphs"  xml:space="preserve">Scale: Lin. Auto</text>
<text x="532.8" y="498" font-family="'Liberation Sans', sans-serif" font-size="11" font-weight="normal" fill="#000" text-anchor="start" textLength="61.88" lengthAdjust="spacingAndGlyphs"  xml:space="preserve">Domain: time</text>
<text x="616.0" y="498" font-family="'Liberation Sans', sans-serif" font-size="11" font-weight="normal" fill="#000" text-anchor="start" textLength="40.74" lengthAdjust="spacingAndGlyphs"  xml:space="preserve">X: 20/39</text>
<text x="672.2" y="498" font-family="'Liberation Sans', sans-serif" font-size="11" font-weight="normal" fill="#000" text-anchor="start" textLength="39.56" lengthAdjust="spacingAndGlyphs"  xml:space="preserve">Y: 23/44</text>
<text x="724.0" y="498" font-family="'Liberation Sans', sans-serif" font-size="11" font-weight="normal" fill="#000" text-anchor="start" textLength="34.34" lengthAdjust="spacingAndGlyphs"  xml:space="preserve">Z: 6/48</text>
<text x="770.9" y="498" font-family="'Liberation Sans', sans-serif" font-size="11" font-weight="normal" fill="#000" text-anchor="start" textLength="108.84" lengthAdjust="spacingAndGlyphs"  xml:space="preserve">Name:  heat_auto  1/1</text>
<path d="M442.5 485 V501" stroke="#c8c8c8"/>
<path d="M523.5 485 V501" stroke="#c8c8c8"/>
<path d="M606.5 485 V501" stroke="#c8c8c8"/>
<path d="M767.5 485 V501" stroke="#c8c8c8"/>
<path d="M882.5 485 V501" stroke="#c8c8c8"/>
<rect x="896" y="493" width="2" height="2" fill="#b8b8b8" rx="0" />
<rect x="893" y="496" width="2" height="2" fill="#b8b8b8" rx="0" />
<rect x="896" y="496" width="2" height="2" fill="#b8b8b8" rx="0" />
<rect x="890" y="499" width="2" height="2" fill="#b8b8b8" rx="0" />
<rect x="893" y="499" width="2" height="2" fill="#b8b8b8" rx="0" />
<rect x="896" y="499" width="2" height="2" fill="#b8b8b8" rx="0" />
</svg></body></html>
